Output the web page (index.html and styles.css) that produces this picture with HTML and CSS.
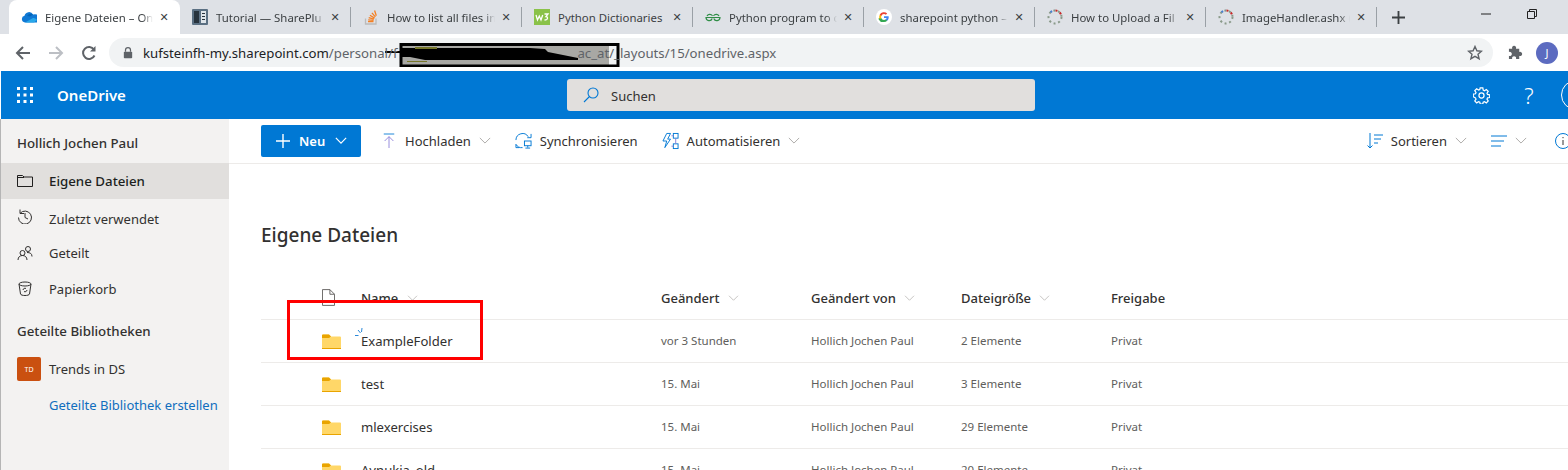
FILE: index.html
```html
<!DOCTYPE html>
<html lang="de">
<head>
<meta charset="utf-8">
<title>Eigene Dateien – OneDrive</title>
<link rel="stylesheet" href="styles.css">
</head>
<body>
<div class="tabstrip">
  <div class="tab active">
    <svg class="fav" viewBox="0 0 16 16"><path d="M4 13.500a3.400 3.400 0 0 1-.5-6.700 4.600 4.600 0 0 1 8.600-1.200 3.800 3.800 0 0 1 3.900 7.900z" fill="#0f78d4"/><path d="M6 7a4.600 4.600 0 0 1 6-1.400L9 7.500z" fill="#0364b8"/><path d="M4 13.500h9l3-2.500c-1-1.500-3-2-4-2z" fill="#28a8ea"/></svg>
    <span class="tab-title">Eigene Dateien – On</span>
    <span class="tab-x">✕</span>
  </div>
  <div class="tab">
    <svg class="fav" viewBox="0 0 16 16"><rect width="16" height="16" rx="1" fill="#5b7083"/><rect x="2" y="2" width="5" height="12" fill="#27333d"/><rect x="9" y="2" width="5" height="12" fill="#dfe5ea"/><path d="M10 4h3v1h-3zM10 7h3v1h-3zM10 10h3v1h-3z" fill="#27333d"/></svg>
    <span class="tab-title">Tutorial — SharePlu</span>
    <span class="tab-x">✕</span>
  </div>
  <div class="tab">
    <svg class="fav" viewBox="0 0 16 16"><path d="M2.500 9.500v5.500h10.500V9.500" fill="none" stroke="#bcbbbb" stroke-width="1.300"/><path d="M5 12.700h5.500M5.200 10.800l5.400.5M5.700 8.700l5.200 1.500M6.900 6.300l4.700 2.800M8.900 3.800l3.500 4.100M11.600 1.500l1.700 5.200" stroke="#f48024" stroke-width="1.300" fill="none"/></svg>
    <span class="tab-title">How to list all files in</span>
    <span class="tab-x">✕</span>
  </div>
  <div class="tab">
    <svg class="fav" viewBox="0 0 16 16"><rect width="16" height="16" fill="#8ac249"/><path d="M2 6l1.500 5 1.800-4 1.700 4L8.700 6M10.500 5H14l-2 2.500c2 0 2.500 3.500-1.500 3.500" fill="none" stroke="#fff" stroke-width="1.300"/></svg>
    <span class="tab-title plain">Python Dictionaries</span>
    <span class="tab-x">✕</span>
  </div>
  <div class="tab">
    <svg class="fav" viewBox="0 0 16 16"><path d="M8 8.500H1a3.200 3.200 0 0 0 6.200 1M8 8.500h7a3.200 3.200 0 0 1-6.200 1M7.500 6.800A3.200 3.200 0 0 0 2 7M8.500 6.800A3.200 3.200 0 0 1 14 7" fill="none" stroke="#2f8d46" stroke-width="1.200"/></svg>
    <span class="tab-title">Python program to c</span>
    <span class="tab-x">✕</span>
  </div>
  <div class="tab">
    <svg class="fav" viewBox="0 0 16 16"><circle cx="8" cy="8" r="8" fill="#fff"/><path d="M12.700 8.200c0-.4 0-.7-.1-1H8v1.800h2.600a2.300 2.300 0 0 1-1 1.500v1.200h1.600c1-.9 1.500-2.100 1.500-3.500z" fill="#4285f4"/><path d="M8 13c1.300 0 2.400-.4 3.200-1.200l-1.600-1.200c-.4.300-1 .5-1.600.5-1.300 0-2.300-.8-2.700-2H2.700v1.300A5 5 0 0 0 8 13z" fill="#34a853"/><path d="M5.300 9.100a3 3 0 0 1 0-2V5.800H3.700a5 5 0 0 0 0 4.500z" fill="#fbbc05"/><path d="M8 5.100c.7 0 1.300.2 1.800.7l1.400-1.400A5 5 0 0 0 3.700 5.800l1.600 1.300c.4-1.200 1.400-2 2.700-2z" fill="#ea4335"/></svg>
    <span class="tab-title">sharepoint python –</span>
    <span class="tab-x">✕</span>
  </div>
  <div class="tab">
    <svg class="fav" viewBox="0 0 16 16"><g fill="none" stroke-width="2" stroke-dasharray="2 2.700"><circle cx="8" cy="8" r="6.500" stroke="#8a9a8a"/><path d="M3.500 3.300A6.500 6.500 0 0 1 8 1.500" stroke="#4a80d0"/><path d="M8.500 1.500a6.500 6.500 0 0 1 6 6" stroke="#c62828"/></g></svg>
    <span class="tab-title">How to Upload a Fil</span>
    <span class="tab-x">✕</span>
  </div>
  <div class="tab">
    <svg class="fav" viewBox="0 0 16 16"><g fill="none" stroke-width="2" stroke-dasharray="2 2.700"><circle cx="8" cy="8" r="6.500" stroke="#8a9a8a"/><path d="M3.500 3.300A6.500 6.500 0 0 1 8 1.500" stroke="#4a80d0"/><path d="M8.500 1.500a6.500 6.500 0 0 1 6 6" stroke="#c62828"/></g></svg>
    <span class="tab-title">ImageHandler.ashx (</span>
    <span class="tab-x">✕</span>
  </div>
  <svg class="newtab" viewBox="0 0 14 14"><path d="M7 0v14M0 7h14" stroke="#3c4043" stroke-width="2"/></svg>
  <div class="winctl">
    <svg class="ctl" viewBox="0 0 10 10"><path d="M0 5h10" stroke="#222" stroke-width="1"/></svg>
    <svg class="ctl" viewBox="0 0 10 10"><path d="M.500 2.500h7v7h-7zM2.500 2.500v-2h7v7h-2" fill="none" stroke="#222"/></svg>
  </div>
</div>

<div class="toolbar">
  <svg class="nav-ico" viewBox="0 0 16 16"><path d="M15 8H2M8 2L2 8l6 6" fill="none" stroke="#5f6368" stroke-width="2"/></svg>
  <svg class="nav-ico" viewBox="0 0 16 16"><path d="M1 8h13M8 2l6 6-6 6" fill="none" stroke="#bcbfc4" stroke-width="2"/></svg>
  <svg class="nav-ico" viewBox="0 0 16 16"><path d="M13.500 10.500A6 6 0 1 1 13 4.500" fill="none" stroke="#5f6368" stroke-width="2"/><path d="M14.500 1v5.500H9z" fill="#5f6368"/></svg>
  <div class="omnibox">
    <svg class="lock" viewBox="0 0 12 14"><path d="M3 6V4a3 3 0 0 1 6 0v2" fill="none" stroke="#5f6368" stroke-width="1.500"/><rect x="1" y="6" width="10" height="8" rx="1" fill="#5f6368"/></svg>
    <span class="url"><span class="host">kufsteinfh-my.sharepoint.com</span>/personal/f<span class="url-gap"></span>ac_at/_layouts/15/onedrive.aspx</span>
    <svg class="star" viewBox="0 0 16 16"><path d="M8 1.500l1.900 4.300 4.600.4-3.500 3 1.100 4.500L8 11.300l-4.100 2.400L5 9.200l-3.500-3 4.600-.4z" fill="none" stroke="#5f6368" stroke-width="1.400"/></svg>
  </div>
  <svg class="puzzle" viewBox="0 0 16 16"><path d="M1 4h3.500a2.200 2.200 0 1 1 4 0H12v3.500a2.200 2.200 0 1 1 0 4V15H8.500a2.200 2.200 0 1 0-4 0H1v-3.500a2.200 2.200 0 1 0 0-4z" fill="#5f6368"/></svg>
  <span class="avatar">J</span>
</div>

<svg class="redact" viewBox="0 0 235 24" preserveAspectRatio="none">
  <path d="M30 0c10-2 20-2 30 0zM75 0c20-2 40-2 55 0z" fill="#a9a9a0"/>
  <rect x="15" y="2" width="209" height="20" fill="#a8a8a4"/>
  <path d="M0 8h15v2H0z" fill="#000"/>
  <path d="M15 5h130l15 1 3 3 30 6v2H40l-15-3H15z" fill="#000"/>
  <path d="M30 4h22v2H30zM22 18h20v1H22z" fill="#77772a"/>
  <path d="M16 0v23h217V1.500H16" fill="none" stroke="#000" stroke-width="3"/>
</svg>

<div class="suitebar">
  <svg class="waffle" viewBox="0 0 16 16"><g fill="#fff"><rect width="3" height="3"/><rect x="6.500" width="3" height="3"/><rect x="13" width="3" height="3"/><rect y="6.500" width="3" height="3"/><rect x="6.500" y="6.500" width="3" height="3"/><rect x="13" y="6.500" width="3" height="3"/><rect y="13" width="3" height="3"/><rect x="6.500" y="13" width="3" height="3"/><rect x="13" y="13" width="3" height="3"/></g></svg>
  <span class="brand">OneDrive</span>
  <div class="search">
    <svg class="search-ico" viewBox="0 0 16 16"><circle cx="10" cy="6" r="5" fill="none" stroke="#0078d4" stroke-width="1.100"/><path d="M6.500 9.500L1 15" stroke="#0078d4" stroke-width="1.100"/></svg>
    <span class="search-text">Suchen</span>
  </div>
  <div class="suite-right">
    <svg class="gear" viewBox="0 0 18 18"><circle cx="9" cy="9" r="2.700" fill="none" stroke="#fff" stroke-width="1.300"/><path d="M7.600 1h2.800l.4 2.300 1.300.6 2-1.300 2 2-1.300 2 .6 1.300 2.300.4v2.800l-2.300.4-.6 1.300 1.300 2-2 2-2-1.300-1.300.6-.4 1.900H7.600l-.4-1.900-1.300-.6-2 1.300-2-2 1.300-2-.6-1.300L.3 10.400V7.600l2.300-.4.6-1.300-1.300-2 2-2 2 1.300 1.300-.6z" fill="none" stroke="#fff" stroke-width="1.300"/></svg>
    <span class="help">?</span>
    <span class="me"></span>
  </div>
</div>

<div class="app">
  <nav class="leftnav">
    <div class="nav-head">Hollich Jochen Paul</div>
    <div class="nav-item selected">
      <svg class="nav-svg" viewBox="0 0 16 16"><path d="M.500 13.500v-11h5l1.500 1.500h8.500v9.500zM.500 4.500h6.500" fill="none" stroke="#201f1e"/></svg>
      <span>Eigene Dateien</span>
    </div>
    <div class="nav-item recent">
      <svg class="nav-svg" viewBox="0 0 16 16"><path d="M3 1.500v4h4M3.200 5.200A6.500 6.500 0 1 1 1.500 9.500M8 5v4.500l3 1.500" fill="none" stroke="#323130"/></svg>
      <span>Zuletzt verwendet</span>
    </div>
    <div class="nav-item shared">
      <svg class="nav-svg" viewBox="0 0 16 16"><circle cx="5.500" cy="8" r="2.500" fill="none" stroke="#323130"/><circle cx="11" cy="4" r="2.500" fill="none" stroke="#323130"/><path d="M1 15c0-3 2-4.500 4.500-4.500S10 12 10 15M10 7.500c3 0 5 1 5 4" fill="none" stroke="#323130"/></svg>
      <span>Geteilt</span>
    </div>
    <div class="nav-item trash">
      <svg class="nav-svg" viewBox="0 0 16 16"><ellipse cx="8" cy="3" rx="6" ry="2" fill="none" stroke="#323130"/><path d="M2 3l1.500 10c.5 2 8.500 2 9 0L14 3M6 9a2 2 0 0 1 3-1.500M10 9a2 2 0 0 1-3 1.500" fill="none" stroke="#323130"/></svg>
      <span>Papierkorb</span>
    </div>
    <div class="nav-head libs">Geteilte Bibliotheken</div>
    <div class="nav-item site">
      <span class="site-badge">TD</span>
      <span>Trends in DS</span>
    </div>
    <div class="nav-link">Geteilte Bibliothek erstellen</div>
  </nav>

  <main class="content">
    <div class="cmdbar">
      <button class="btn-new">
        <svg class="plus" viewBox="0 0 14 14"><path d="M7 0v14M0 7h14" stroke="#fff" stroke-width="1.400"/></svg>
        <span>Neu</span>
        <svg class="chev white" viewBox="0 0 14 8"><path d="M1 1l6 6 6-6" fill="none" stroke="#fff" stroke-width="1.400"/></svg>
      </button>
      <div class="cmd upload">
        <svg class="cmd-ico" viewBox="0 0 16 18"><path d="M2 1h12" stroke="#0078d4"/><path d="M8 17V4M3 9l5-5 5 5" fill="none" stroke="#8a7fd8"/></svg>
        <span>Hochladen</span>
        <svg class="chev" viewBox="0 0 14 8"><path d="M1 1l6 6 6-6" fill="none" stroke="#a19f9d"/></svg>
      </div>
      <div class="cmd sync">
        <svg class="cmd-ico wide" viewBox="0 0 18 18"><path d="M1 8a7 7 0 0 1 13-3.500M17 1.500v4h-4M4.500 16H1v-3.500M1 12.500A7 7 0 0 0 8 16" fill="none" stroke="#0078d4"/><rect x="10" y="9" width="7" height="5" fill="none" stroke="#0078d4"/><path d="M13.500 14v2M11 16.500h5" stroke="#0078d4"/></svg>
        <span>Synchronisieren</span>
      </div>
      <div class="cmd flow">
        <svg class="cmd-ico wide" viewBox="0 0 18 18"><path d="M5 1h4L6 7h3L3 16l2-7H1z" fill="none" stroke="#0078d4"/><rect x="12" y="1" width="5" height="5" fill="none" stroke="#0078d4"/><rect x="12" y="12" width="5" height="5" fill="none" stroke="#0078d4"/><path d="M14.500 6v6M10 3.500h2M10 14.500h2" stroke="#8a7fd8"/></svg>
        <span>Automatisieren</span>
        <svg class="chev" viewBox="0 0 14 8"><path d="M1 1l6 6 6-6" fill="none" stroke="#a19f9d"/></svg>
      </div>
      <div class="cmd-right">
        <div class="cmd sort">
          <svg class="cmd-ico" viewBox="0 0 16 16"><path d="M3 0v15M.500 12.500L3 15l2.500-2.500" fill="none" stroke="#0078d4"/><path d="M7 2h9M7 6h7M7 10h4" stroke="#0078d4"/></svg>
          <span>Sortieren</span>
          <svg class="chev" viewBox="0 0 14 8"><path d="M1 1l6 6 6-6" fill="none" stroke="#a19f9d"/></svg>
        </div>
        <div class="cmd view">
          <svg class="cmd-ico" viewBox="0 0 16 12"><path d="M0 1h16M0 6h13M0 11h10" stroke="#0078d4"/></svg>
          <svg class="chev" viewBox="0 0 14 8"><path d="M1 1l6 6 6-6" fill="none" stroke="#a19f9d"/></svg>
        </div>
        <svg class="info" viewBox="0 0 16 16"><circle cx="8" cy="8" r="7.500" fill="none" stroke="#0078d4"/><path d="M8 7v5" stroke="#323130"/><path d="M8 4v1.200" stroke="#323130"/></svg>
      </div>
    </div>

    <h1 class="page-title">Eigene Dateien</h1>

    <div class="grid">
      <div class="row header">
        <span class="c-ico"><svg class="doc" viewBox="0 0 14 18"><path d="M.500.500h8l5 5v12H.500zM8.500.500v5h5" fill="none" stroke="#605e5c"/></svg></span>
        <span class="c-name">Name <svg class="chev small" viewBox="0 0 14 8"><path d="M1 1l6 6 6-6" fill="none" stroke="#b3b0ad"/></svg></span>
        <span class="c-col">Geändert <svg class="chev small" viewBox="0 0 14 8"><path d="M1 1l6 6 6-6" fill="none" stroke="#b3b0ad"/></svg></span>
        <span class="c-col">Geändert von <svg class="chev small" viewBox="0 0 14 8"><path d="M1 1l6 6 6-6" fill="none" stroke="#b3b0ad"/></svg></span>
        <span class="c-col">Dateigröße <svg class="chev small" viewBox="0 0 14 8"><path d="M1 1l6 6 6-6" fill="none" stroke="#b3b0ad"/></svg></span>
        <span class="c-col">Freigabe</span>
      </div>
      <div class="row">
        <span class="c-ico"><svg class="folder" viewBox="0 0 19 15"><path d="M0 1.500A1 1 0 0 1 1 .5h6l2 2h9a1 1 0 0 1 1 1V14a1 1 0 0 1-1 1H1a1 1 0 0 1-1-1z" fill="#ffd768"/><path d="M0 1.500A1 1 0 0 1 1 .5h6l2 2-2 1.500H0z" fill="#e9a400"/><path d="M0 14h19v1H0z" fill="#e9a400"/></svg></span>
        <span class="c-name file">ExampleFolder<svg class="spin" viewBox="0 0 8 8"><path d="M0 7.500h3.500M3 2l2.500 3M6.500 4l.500-4" stroke="#2b88d8" fill="none"/></svg></span>
        <span class="c-cell">vor 3 Stunden</span>
        <span class="c-cell">Hollich Jochen Paul</span>
        <span class="c-cell">2 Elemente</span>
        <span class="c-cell">Privat</span>
      </div>
      <div class="row">
        <span class="c-ico"><svg class="folder" viewBox="0 0 19 15"><path d="M0 1.500A1 1 0 0 1 1 .5h6l2 2h9a1 1 0 0 1 1 1V14a1 1 0 0 1-1 1H1a1 1 0 0 1-1-1z" fill="#ffd768"/><path d="M0 1.500A1 1 0 0 1 1 .5h6l2 2-2 1.500H0z" fill="#e9a400"/><path d="M0 14h19v1H0z" fill="#e9a400"/></svg></span>
        <span class="c-name file">test</span>
        <span class="c-cell">15. Mai</span>
        <span class="c-cell">Hollich Jochen Paul</span>
        <span class="c-cell">3 Elemente</span>
        <span class="c-cell">Privat</span>
      </div>
      <div class="row">
        <span class="c-ico"><svg class="folder" viewBox="0 0 19 15"><path d="M0 1.500A1 1 0 0 1 1 .5h6l2 2h9a1 1 0 0 1 1 1V14a1 1 0 0 1-1 1H1a1 1 0 0 1-1-1z" fill="#ffd768"/><path d="M0 1.500A1 1 0 0 1 1 .5h6l2 2-2 1.500H0z" fill="#e9a400"/><path d="M0 14h19v1H0z" fill="#e9a400"/></svg></span>
        <span class="c-name file">mlexercises</span>
        <span class="c-cell">15. Mai</span>
        <span class="c-cell">Hollich Jochen Paul</span>
        <span class="c-cell">29 Elemente</span>
        <span class="c-cell">Privat</span>
      </div>
      <div class="row">
        <span class="c-ico"><svg class="folder" viewBox="0 0 19 15"><path d="M0 1.500A1 1 0 0 1 1 .5h6l2 2h9a1 1 0 0 1 1 1V14a1 1 0 0 1-1 1H1a1 1 0 0 1-1-1z" fill="#ffd768"/><path d="M0 1.500A1 1 0 0 1 1 .5h6l2 2-2 1.500H0z" fill="#e9a400"/><path d="M0 14h19v1H0z" fill="#e9a400"/></svg></span>
        <span class="c-name file">Aynukia_old</span>
        <span class="c-cell">15. Mai</span>
        <span class="c-cell">Hollich Jochen Paul</span>
        <span class="c-cell">20 Elemente</span>
        <span class="c-cell">Privat</span>
      </div>
    </div>
  </main>
</div>
<div class="redbox"></div>
</body>
</html>
```

FILE: styles.css
```css
* { box-sizing: border-box; }
html, body { margin: 0; height: 470px; overflow: hidden; background: #fff; }
body { font-family: "Noto Sans", "Open Sans", sans-serif; color: #323130; position: relative; width: 1568px; }

/* Browser chrome */
.tabstrip { display: flex; align-items: center; height: 34px; padding-left: 9px; background: #dee1e6; }
.tab { display: flex; align-items: center; width: 171px; height: 34px; padding-left: 12px; padding-right: 8px; font-size: 11.400px; color: #3c4043; position: relative; }
.tab::after { content: ""; position: absolute; right: 0; top: 7px; height: 20px; width: 1px; background: #9aa0a6; }
.tab.active { background: #fff; border-radius: 8px 8px 0 0; }
.tab.active::after { display: none; }
.fav { width: 16px; height: 16px; flex: none; }
.tab-title { flex: 1; margin-left: 8px; overflow: hidden; white-space: nowrap; -webkit-mask-image: linear-gradient(90deg, #000 90%, transparent); mask-image: linear-gradient(90deg, #000 90%, transparent); }
.tab-title.plain { -webkit-mask-image: none; mask-image: none; }
.tab-x { flex: none; width: 16px; margin-left: 3px; text-align: center; font-size: 11px; font-weight: 700; color: #3c4043; font-family: "DejaVu Sans", sans-serif; }
.newtab { width: 13px; height: 13px; margin-left: 15px; }
.winctl { display: flex; gap: 36px; margin-left: auto; margin-right: 31px; align-self: flex-start; margin-top: 9px; }
.ctl { width: 10px; height: 10px; }

.toolbar { display: flex; align-items: center; height: 37px; background: #fff; padding-left: 15px; }
.nav-ico { width: 16px; height: 16px; margin-right: 17px; flex: none; }
.nav-ico:nth-child(3) { margin-right: 12px; }
.omnibox { display: flex; align-items: center; width: 1384px; height: 29px; border-radius: 15px; background: #f1f3f4; padding-left: 14px; padding-right: 10px; color: #5f6368; }
.lock { width: 10px; height: 13px; flex: none; }
.url { margin-left: 10px; white-space: nowrap; font-size: 13.200px; flex: 1; position: relative; z-index: 2; }
.host { color: #202124; }
.url-gap { display: inline-block; width: 180px; }
.star { width: 16px; height: 16px; flex: none; }
.puzzle { width: 15px; height: 15px; margin-left: 15px; flex: none; }
.avatar { display: flex; align-items: center; justify-content: center; width: 22px; height: 22px; margin-left: 13px; border-radius: 50%; background: #5c6bc0; color: #fff; font-size: 11px; flex: none; }
.redact { position: absolute; left: 385px; top: 43px; width: 235px; height: 24px; z-index: 1; }

/* Suite bar */
.suitebar { display: flex; align-items: center; height: 48px; background: #0078d4; margin-left: 1px; position: relative; }
.waffle { width: 16px; height: 16px; margin-left: 16px; flex: none; }
.brand { margin-left: 24px; font-size: 15px; font-weight: 600; color: #fff; }
.search { position: absolute; left: 566px; top: 8px; display: flex; align-items: center; width: 468px; height: 32px; border-radius: 3px; background: #e1dfdd; font-size: 13px; color: #323130; padding-left: 16px; }
.search-ico { width: 16px; height: 16px; margin-right: 12px; }
.search-text { padding-top: 2px; }
.suite-right { display: flex; align-items: center; margin-left: auto; }
.gear { width: 17px; height: 17px; margin-right: 29px; }
.help { font-size: 22px; font-weight: 300; color: #fff; line-height: 1; width: 20px; text-align: center; margin-right: -6px; }
.me { width: 30px; height: 30px; border: 1px solid #fff; border-radius: 50%; margin-left: 28px; margin-right: -23px; flex: none; }

/* App */
.app { display: flex; height: 351px; border-left: 1px solid #b5b5b5; }
.leftnav { width: 228px; flex: none; background: #f3f2f1; font-size: 13px; }
.nav-head { font-weight: 500; font-size: 13.300px; padding-left: 16px; height: 44px; line-height: 48px; }
.nav-head.libs { height: 24px; line-height: 24px; margin-top: 10px; }
.nav-item { display: flex; align-items: center; height: 36px; padding-left: 16px; white-space: nowrap; }
.nav-item.selected { background: #e1dfdd; font-weight: 500; font-size: 13.300px; color: #201f1e; }
.nav-item.recent { margin-top: 2px; }
.nav-item.recent .nav-svg { margin-top: -6px; }
.nav-item.shared { height: 32px; }
.nav-item.trash { height: 40px; }
.nav-item.site { height: 36px; margin-top: 8px; }
.nav-svg { width: 16px; height: 16px; margin-right: 16px; flex: none; }
.site-badge { display: flex; align-items: center; justify-content: center; width: 24px; height: 24px; margin-right: 8px; border-radius: 2px; background: #ca5010; color: #fff; font-size: 7px; flex: none; }
.nav-link { padding-left: 48px; color: #106ebe; height: 36px; line-height: 36px; white-space: nowrap; }

.content { flex: 1; min-width: 0; overflow: hidden; }
.cmdbar { display: flex; align-items: center; height: 45px; padding: 0 0 1px 32px; border-bottom: 1px solid #edebe9; font-size: 13px; white-space: nowrap; }
.btn-new { display: flex; align-items: center; width: 100px; height: 32px; padding: 0 0 0 15px; border: 0; border-radius: 2px; background: #0078d4; color: #fff; font: 600 13px "Noto Sans", sans-serif; flex: none; }
.plus { width: 14px; height: 14px; margin-right: 9px; }
.btn-new .chev { margin-left: 10px; }
.chev { width: 12px; height: 7px; flex: none; }
.cmd { display: flex; align-items: center; flex: none; }
.cmd-ico { width: 14px; height: 16px; margin-right: 9px; flex: none; }
.cmd-ico.wide { width: 17px; height: 18px; margin-right: 8px; }
.cmd .chev { margin-left: 8px; }
.upload { margin-left: 21px; }
.sync { margin-left: 24px; }
.flow { margin-left: 24px; }
.cmd-right { display: flex; align-items: center; margin-left: auto; }
.sort .cmd-ico { width: 16px; margin-right: 8px; }
.view { margin-left: 24px; }
.view .cmd-ico { width: 16px; height: 12px; margin-right: 0; }
.info { width: 16px; height: 16px; margin-left: 28px; margin-right: -3px; flex: none; }

.page-title { margin: 56px 0 0 32px; height: 30px; font-size: 19px; line-height: 30px; font-weight: 500; color: #323130; }

.grid { margin: 26px 0 0 32px; }
.row { display: grid; grid-template-columns: 100px 300px 150px 150px 150px 1fr; align-items: center; height: 43px; border-bottom: 1px solid #edebe9; font-size: 12px; color: #605e5c; white-space: nowrap; }
.row.header { height: 44px; font-size: 13px; font-weight: 500; color: #323130; }
.c-ico { display: flex; justify-content: flex-end; padding-right: 20px; }
.doc { width: 13px; height: 17px; margin-right: 6px; }
.folder { width: 19px; height: 15px; }
.c-name.file { font-size: 13.100px; color: #323130; position: relative; }
.spin { position: absolute; left: -6px; top: -4px; width: 8px; height: 8px; }
.small { width: 13px; height: 6px; margin-left: 4px; vertical-align: 2px; }
.c-cell { font-size: 11.500px; padding-bottom: 2px; }

.redbox { position: absolute; left: 287px; top: 300px; width: 196px; height: 60px; border: 3px solid #ff0000; }
```
